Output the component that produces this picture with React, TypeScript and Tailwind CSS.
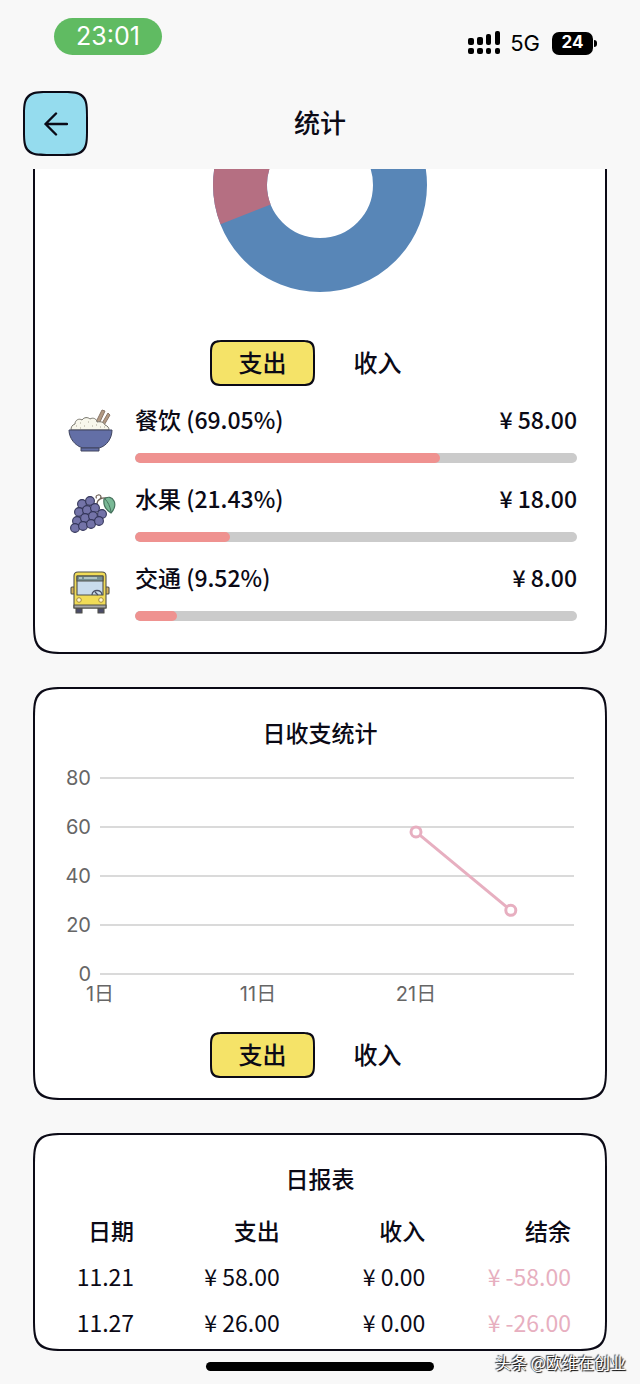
import React from 'react';

interface Category {
  name: string;
  percent: number;
  amount: string;
  icon: React.ReactNode;
}

const RiceIcon: React.FC = () => (
  <svg viewBox="0 0 54 54" className="h-[54px] w-[54px] shrink-0" aria-hidden="true">
    <g stroke="#8a7668" strokeWidth="1" fill="#b39a84" strokeLinejoin="round">
      <path d="M33 17 39 5l3 1-6 13z" />
      <path d="M38 20 45 8l2 2-7 12z" />
    </g>
    <path
      d="M8 25c0-3 1-5 4-6 0-4 4-6 7-4 2-3 6-3 8-1 3-2 7 0 7 3 5-1 7 1 8 3 3 1 4 3 4 5z"
      fill="#f8f7ec"
      stroke="#77756c"
      strokeWidth="1"
    />
    <path
      d="M13 21h1M17 18h1M21 21h1M25 17h1M29 21h1M33 20h1M37 22h1M41 22h1M17 23h1"
      stroke="#a8a493"
      strokeWidth="1"
    />
    <path d="M6 25h43c0 8-5 16-13 18H20C12 41 6 33 6 25z" fill="#636fa6" stroke="#40455f" strokeWidth="1" />
    <path d="M18 43h18v3H18z" fill="#636fa6" stroke="#40455f" strokeWidth="1" />
  </svg>
);

const grapes = [
  [19, 20], [27, 17], [16, 28], [24, 26], [32, 24], [14, 37], [22, 34],
  [30, 32], [39, 30], [12, 44], [20, 42], [28, 40], [36, 37],
];

const GrapeIcon: React.FC = () => (
  <svg viewBox="0 0 54 54" className="h-[54px] w-[54px] shrink-0" aria-hidden="true">
    <path d="M34 20c0-4 4-7 11-6M36 16c4-3 1-6-1-5-3 1-2 3-1 3" fill="none" stroke="#6f6257" strokeWidth="1.2" />
    <path d="M41 15c4-3 8-2 10 2 2 4 0 9-3 12-5-3-8-7-7-14z" fill="#79b996" stroke="#46725d" strokeWidth="1.2" />
    <path d="M42 15c3 3 5 7 6 13" fill="none" stroke="#46725d" strokeWidth="1" />
    {grapes.map(([x, y]) => (
      <circle key={`${x}-${y}`} cx={x} cy={y} r="4.4" fill="#7373a8" stroke="#34365a" strokeWidth="1.1" />
    ))}
  </svg>
);

const BusIcon: React.FC = () => (
  <svg viewBox="0 0 54 54" className="h-[54px] w-[54px] shrink-0" aria-hidden="true">
    <g stroke="#50504a" strokeWidth="1.1" strokeLinejoin="round">
      <path d="M13 45h6v5h-6zM35 45h6v5h-6z" fill="#4a4c68" />
      <rect x="8" y="24" width="4" height="7" rx="1" fill="#d6b35e" />
      <rect x="42" y="24" width="4" height="7" rx="1" fill="#d6b35e" />
      <path d="M11 13q0-4 4-4h24q4 0 4 4v32H11z" fill="#f1dc57" />
      <path d="M14 13h26v19H14z" fill="#c9dcec" />
      <path d="M14 13h26v5H14z" fill="#769093" />
      <path d="M11 42h32v3H11z" fill="#a7a7a7" />
    </g>
    <path d="M16 15h3M21 15h13" stroke="#c3d5d5" strokeWidth="1.3" />
    <path d="M29 32c0-6 10-6 10 0M32 29l3 3" fill="none" stroke="#4a5065" strokeWidth="1.3" />
    <circle cx="16" cy="37" r="2.3" fill="#fff5cf" stroke="#a58d3d" />
    <circle cx="38" cy="37" r="2.3" fill="#fff5cf" stroke="#a58d3d" />
  </svg>
);

const categories: Category[] = [
  { name: '餐饮', percent: 69.05, amount: '58.00', icon: <RiceIcon /> },
  { name: '水果', percent: 21.43, amount: '18.00', icon: <GrapeIcon /> },
  { name: '交通', percent: 9.52, amount: '8.00', icon: <BusIcon /> },
];

const points = [
  { day: 21, value: 58 },
  { day: 27, value: 26 },
];

const report = [
  { date: '11.21', expense: '58.00', income: '0.00', balance: '-58.00' },
  { date: '11.27', expense: '26.00', income: '0.00', balance: '-26.00' },
];

const StatusBar: React.FC = () => (
  <div className="flex h-[73px] items-start justify-between pl-[54px] pr-[43px] pt-[18px] font-[Inter,sans-serif]">
    <div className="flex h-[37px] w-[108px] items-center justify-center rounded-full bg-[#60bb62] text-[25px] text-white">
      23:01
    </div>
    <div className="mt-[13px] flex h-6 items-center text-black">
      <svg viewBox="0 0 33 24" className="h-6 w-[33px]" fill="currentColor" aria-label="信号">
        <rect x="0" y="7" width="6" height="7" rx="2" />
        <rect x="9" y="6" width="6" height="8" rx="2" />
        <rect x="18" y="3" width="5" height="11" rx="2" />
        <rect x="27" y="0" width="5" height="14" rx="2" />
        <rect x="0" y="17" width="6" height="6" rx="2" />
        <rect x="9" y="17" width="6" height="6" rx="2" />
        <rect x="18" y="17" width="5" height="6" rx="2" />
        <rect x="27" y="17" width="5" height="6" rx="2" />
      </svg>
      <span className="ml-[9px] text-[22px]">5G</span>
      <span className="ml-3 flex h-[23px] w-[41px] items-center justify-center rounded-[7px] bg-black text-[17px] font-bold text-white">
        24
      </span>
      <span className="ml-px h-[7px] w-[3px] rounded-r-full bg-black" />
    </div>
  </div>
);

const TypeTabs: React.FC = () => (
  <div className="flex justify-center gap-[10px] text-2xl font-medium">
    <button
      type="button"
      aria-pressed="true"
      className="h-[46px] w-[105px] rounded-[16px] border-2 border-[#0b0a16] bg-[#f5e368] pb-0.5 [corner-shape:squircle]"
    >
      支出
    </button>
    <button type="button" aria-pressed="false" className="h-[46px] w-[105px] pb-0.5">
      收入
    </button>
  </div>
);

const CategoryRow: React.FC<{ item: Category }> = ({ item }) => (
  <li className="flex gap-[18px]">
    {item.icon}
    <div className="flex-1">
      <div className="flex justify-between text-[23px] leading-7 font-medium">
        <span>
          {item.name} ({item.percent}%)
        </span>
        <span>¥ {item.amount}</span>
      </div>
      <div className="mt-5 h-[10px] overflow-hidden rounded-full bg-[#cbcbcb]">
        <div className="h-full rounded-full bg-[#ef9290]" style={{ width: `${item.percent}%` }} />
      </div>
    </div>
  </li>
);

const DonutChart: React.FC = () => (
  <svg viewBox="0 0 214 123" className="mx-auto block w-[214px]" role="img" aria-label="支出分类">
    <circle cx="107" cy="16" r="80" fill="none" stroke="#5886b7" strokeWidth="54" />
    <path d="M7.5 55.3A107 107 0 0 1 7.5-23.3L57.7-3.5A53 53 0 0 0 57.7 35.5z" fill="#b56f82" />
  </svg>
);

const toX = (day: number) => 37 + ((day - 1) / 30) * 474;
const toY = (value: number) => 214 - (value / 80) * 196;

const DailyChart: React.FC = () => (
  <svg viewBox="0 0 514 250" className="mt-[13px] block w-full" role="img" aria-label="日收支统计">
    <g fontSize="20" fill="#666666" className="font-[Inter,'Noto_Sans_CJK_SC',sans-serif]">
      {[80, 60, 40, 20, 0].map((value) => (
        <g key={value}>
          <line x1="37" x2="511" y1={toY(value)} y2={toY(value)} stroke="#dadada" strokeWidth="2" />
          <text x="28" y={toY(value) + 7} textAnchor="end">
            {value}
          </text>
        </g>
      ))}
      {[1, 11, 21].map((day) => (
        <text key={day} x={toX(day)} y="241" textAnchor="middle">
          {day}日
        </text>
      ))}
    </g>
    <g stroke="#e7afc0" strokeWidth="3" fill="#ffffff">
      <polyline points={points.map((p) => `${toX(p.day)},${toY(p.value)}`).join(' ')} fill="none" />
      {points.map((p) => (
        <circle key={p.day} cx={toX(p.day)} cy={toY(p.value)} r="5" />
      ))}
    </g>
  </svg>
);

const DailyReport: React.FC = () => (
  <div className="mt-3.5 pr-1.5">
    <table className="w-full table-fixed text-right text-[23px]">
      <thead>
        <tr className="h-[46px]">
          <th className="w-[14%] font-medium whitespace-nowrap">日期</th>
          <th className="font-medium">支出</th>
          <th className="font-medium">收入</th>
          <th className="font-medium">结余</th>
        </tr>
      </thead>
      <tbody>
        {report.map((row) => (
          <tr key={row.date} className="h-[46px]">
            <td>{row.date}</td>
            <td>¥ {row.expense}</td>
            <td>¥ {row.income}</td>
            <td className="text-[#e7afc0]">¥ {row.balance}</td>
          </tr>
        ))}
      </tbody>
    </table>
  </div>
);

const App: React.FC = () => {
  return (
    <div className="relative bg-[#f8f8f8] pb-[13px] font-['Noto_Sans_CJK_SC',sans-serif] text-[#0b0a16]">
      <StatusBar />
      <header className="grid h-24 grid-cols-[1fr_auto_1fr] items-start px-[23px] pt-[18px]">
        <button
          type="button"
          aria-label="返回"
          className="flex h-[65px] w-[65px] items-center justify-center rounded-[28px] border-2 border-[#0b0a16] bg-[#95dcee] [corner-shape:squircle]"
        >
          <svg viewBox="0 0 24 24" className="h-6 w-6" fill="none" stroke="currentColor" strokeWidth="2.4" strokeLinecap="round" strokeLinejoin="round">
            <path d="M23 12H1.5M12 1.5 1.5 12 12 22.5" />
          </svg>
        </button>
        <h1 className="text-[26px] leading-[62px] font-medium">统计</h1>
      </header>
      <main className="px-[33px]">
        <section className="rounded-b-[36px] border-2 border-t-0 border-[#0b0a16] bg-white px-7 pb-[31px] [corner-shape:squircle]">
          <DonutChart />
          <div className="mt-12">
            <TypeTabs />
          </div>
          <ul className="mt-[19px] flex flex-col gap-[21px]">
            {categories.map((item) => (
              <CategoryRow key={item.name} item={item} />
            ))}
          </ul>
        </section>
        <section className="mt-[33px] rounded-[36px] border-2 border-[#0b0a16] bg-white px-7 pt-7 pb-5 [corner-shape:squircle]">
          <h2 className="text-center text-[23px] leading-[30px] font-medium">日收支统计</h2>
          <DailyChart />
          <div className="mt-[22px]">
            <TypeTabs />
          </div>
        </section>
        <section className="mt-[33px] rounded-[36px] border-2 border-[#0b0a16] bg-white px-7 pt-7 pb-1 [corner-shape:squircle]">
          <h2 className="text-center text-[23px] leading-[30px] font-medium">日报表</h2>
          <DailyReport />
        </section>
      </main>
      <div className="mx-auto mt-[11px] h-[9px] w-[228px] rounded-full bg-black" />
      <p className="absolute right-[14px] bottom-[10px] text-base leading-6 text-white [text-shadow:1px_1px_1px_#000,-1px_-1px_1px_#333]">
        头条 @欧维在创业
      </p>
    </div>
  );
};

export default App;
